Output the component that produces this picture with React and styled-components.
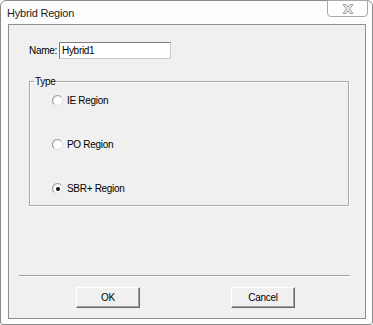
import React, {useState} from "react";
import styled, {createGlobalStyle} from "styled-components";

const GlobalStyle = createGlobalStyle`
  html, body {
    margin: 0;
    padding: 0;
    background: #ffffff;
  }
  * {
    box-sizing: border-box;
  }
`;

const Window = styled.div`
  width: 373px;
  height: 325px;
  display: flex;
  flex-direction: column;
  border: 1px solid #8a8a8a;
  border-radius: 6px 6px 3px 3px;
  background: #fdfdfd;
  padding: 0 6px 5px 7px;
`;

const TitleBar = styled.div`
  height: 23px;
  display: flex;
  align-items: flex-start;
  justify-content: space-between;
`;

const Title = styled.span`
  margin-top: 6px;
  margin-left: -1px;
  font-family: "Liberation Sans", Arial, sans-serif;
  font-size: 11px;
  letter-spacing: -0.2px;
  color: #1b1b1b;
`;

const CloseButton = styled.button`
  width: 41px;
  height: 17px;
  margin-top: -1px;
  margin-right: -2px;
  padding: 0;
  display: flex;
  align-items: center;
  justify-content: center;
  background: #ffffff;
  border: 1px solid #a9a9a9;
  border-radius: 0 0 4px 4px;
`;

const Client = styled.div`
  flex: 1;
  display: flex;
  flex-direction: column;
  background: #f0f0f0;
  border: 1px solid #8f8f8f;
  font-family: "Liberation Sans", Arial, sans-serif;
  font-size: 10px;
  letter-spacing: -0.3px;
  color: #000;
`;

const NameRow = styled.div`
  display: flex;
  align-items: center;
  margin: 17px 0 0 20px;
`;

const Label = styled.span`
  width: 30px;
`;

const TextInput = styled.input`
  width: 112px;
  height: 17px;
  padding: 0 2px;
  font: inherit;
  letter-spacing: inherit;
  color: #000;
  background: #fff;
  border: 1px solid;
  border-color: #7f7f7f #c9c9c9 #c9c9c9 #7f7f7f;
  outline: none;
`;

const GroupBox = styled.fieldset`
  width: 320px;
  height: 131px;
  margin: 16px 0 0 20px;
  padding: 6px 0 0 4px;
  border: 1px solid #a9a9a9;
  box-shadow: inset 1px 1px #ffffff, 1px 1px #ffffff;
  display: flex;
  flex-direction: column;
  gap: 31px;
`;

const Legend = styled.legend`
  padding: 0 1px;
  line-height: 13px;
`;

const RadioRow = styled.label`
  display: flex;
  align-items: center;
  gap: 3px;
  height: 13px;
  margin-left: 18px;
  cursor: default;
`;

const RadioDot = styled.span`
  width: 11px;
  height: 11px;
  border-radius: 50%;
  display: flex;
  align-items: center;
  justify-content: center;
  border: 1px solid;
  border-color: #9b9b9b #e2e2e2 #e2e2e2 #9b9b9b;
  background: radial-gradient(circle at 60% 60%, #ffffff 40%, #e4e4e4 100%);
  margin-right: 1px;

  &::after {
    content: "";
    width: 4px;
    height: 4px;
    border-radius: 50%;
    background: ${props => (props.$checked ? "#111" : "transparent")};
  }
`;

const Spacer = styled.div`
  flex: 1;
`;

const Separator = styled.div`
  height: 2px;
  margin: 0 15px 0 10px;
  border-top: 1px solid #a0a0a0;
  border-bottom: 1px solid #ffffff;
`;

const ButtonRow = styled.div`
  display: flex;
  gap: 91px;
  padding: 10px 0 10px 67px;
`;

const PushButton = styled.button`
  width: 64px;
  height: 21px;
  padding: 0;
  font: inherit;
  letter-spacing: inherit;
  color: #000;
  background: #f0f0f0;
  border: 1px solid;
  border-color: #ffffff #696969 #696969 #ffffff;
  box-shadow: inset -1px -1px #a0a0a0;
`;

const regions = ["IE Region", "PO Region", "SBR+ Region"];

export default function App() {
    const [name, setName] = useState("Hybrid1");
    const [type, setType] = useState(2);

    return (
        <>
            <GlobalStyle/>
            <Window>
                <TitleBar>
                    <Title>Hybrid Region</Title>
                    <CloseButton aria-label="Close">
                        <svg width="12" height="10" viewBox="0 0 12 10">
                            <path d="M1 0.5 L4 0.5 L6 3.2 L8 0.5 L11 0.5 L7.6 5 L11 9.5 L8 9.5 L6 6.8 L4 9.5 L1 9.5 L4.4 5 Z"
                                  fill="#e8e8e8" stroke="#9a9a9a" strokeWidth="0.9" strokeLinejoin="round"/>
                        </svg>
                    </CloseButton>
                </TitleBar>
                <Client>
                    <NameRow>
                        <Label>Name:</Label>
                        <TextInput value={name} onChange={e => setName(e.target.value)}/>
                    </NameRow>
                    <GroupBox>
                        <Legend>Type</Legend>
                        {regions.map((r, i) => (
                            <RadioRow key={r} onClick={() => setType(i)}>
                                <RadioDot $checked={type === i}/>
                                {r}
                            </RadioRow>
                        ))}
                    </GroupBox>
                    <Spacer/>
                    <Separator/>
                    <ButtonRow>
                        <PushButton>OK</PushButton>
                        <PushButton>Cancel</PushButton>
                    </ButtonRow>
                </Client>
            </Window>
        </>
    );
}
